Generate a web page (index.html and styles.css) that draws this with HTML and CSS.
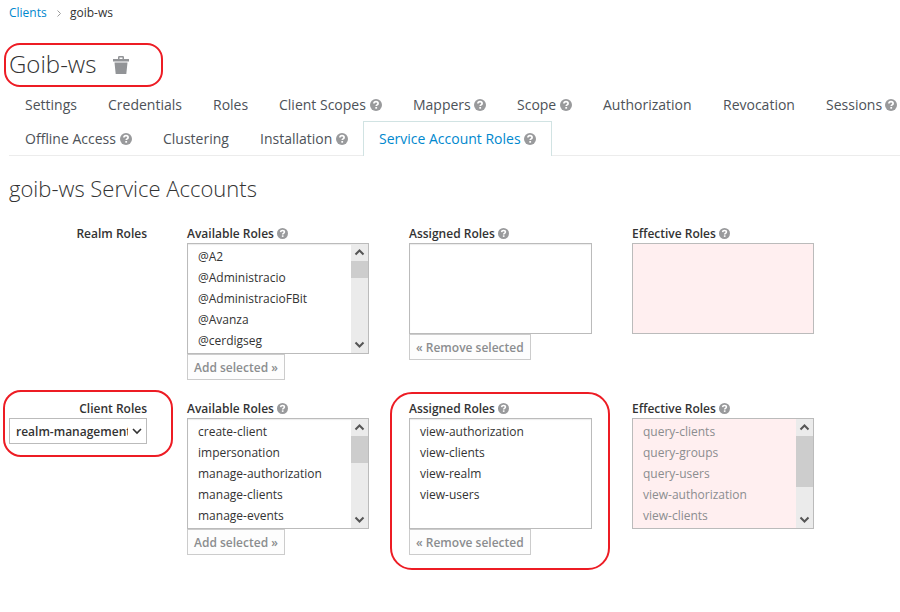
FILE: index.html
```html
<!DOCTYPE html>
<html lang="en">
<head>
<meta charset="utf-8">
<title>goib-ws</title>
<link rel="stylesheet" href="styles.css">
</head>
<body>
<svg class="defs" aria-hidden="true">
  <symbol id="help" viewBox="0 0 12 12"><circle cx="6" cy="6" r="6" fill="#999a9c"/><path d="M3.900 4.500C4 3.200 4.900 2.700 6 2.700c1.200 0 2.100.7 2.100 1.700 0 1.500-1.900 1.400-1.900 2.700" fill="none" stroke="#fff" stroke-width="1.700"/><path d="M5.300 8h1.800v1.700H5.300z" fill="#fff"/></symbol>
  <symbol id="up" viewBox="0 0 17 17"><path d="M4.500 10.500l4-4 4 4" fill="none" stroke="#555" stroke-width="2"/></symbol>
  <symbol id="down" viewBox="0 0 17 17"><path d="M4.500 6.500l4 4 4-4" fill="none" stroke="#555" stroke-width="2"/></symbol>
</svg>
<main class="page">
  <nav class="breadcrumb"><a class="crumb-link">Clients</a><svg class="crumb-sep" viewBox="0 0 4 7"><path d="M.5.5l3 3-3 3" fill="none" stroke="#9c9c9c"/></svg><span class="crumb-current">goib-ws</span></nav>
  <h1 class="title"><span class="title-text">Goib-ws</span><svg class="trash" viewBox="0 0 16 18"><path d="M0 3h5V1.200Q5 0 6.200 0h3.600Q11 0 11 1.200V3h5v2.500H0zM6.500 3h3V1.500h-3zM1.500 6.500h13L13.300 18H2.700z" fill="#929497" fill-rule="evenodd"/></svg></h1>

  <div class="tabs">
    <div class="tab-row">
      <a class="tab t-settings">Settings</a>
      <a class="tab t-credentials">Credentials</a>
      <a class="tab t-roles">Roles</a>
      <a class="tab t-client">Client Scopes<svg class="help"><use href="#help"/></svg></a>
      <a class="tab t-mappers">Mappers<svg class="help"><use href="#help"/></svg></a>
      <a class="tab t-scope">Scope<svg class="help"><use href="#help"/></svg></a>
      <a class="tab t-auth">Authorization</a>
      <a class="tab t-revocation">Revocation</a>
      <a class="tab t-sessions">Sessions<svg class="help"><use href="#help"/></svg></a>
    </div>
    <div class="tab-row last">
      <a class="tab t-offline">Offline Access<svg class="help"><use href="#help"/></svg></a>
      <a class="tab t-clustering">Clustering</a>
      <a class="tab t-install">Installation<svg class="help"><use href="#help"/></svg></a>
      <a class="tab t-service active">Service Account Roles<svg class="help"><use href="#help"/></svg></a>
    </div>
  </div>

  <h2 class="subtitle">goib-ws Service Accounts</h2>

  <section class="roles">
    <div class="group"><div class="label">Realm Roles</div></div>
    <div class="column">
      <div class="label">Available Roles<svg class="help" viewBox="0 0 12 12"><use href="#help" width="12" height="12"/></svg></div>
      <div class="list">
        <ul class="options"><li>@A2</li><li>@Administracio</li><li>@AdministracioFBit</li><li>@Avanza</li><li>@cerdigseg</li></ul>
        <div class="scrollbar"><svg class="arrow"><use href="#up"/></svg><div class="track"><div class="thumb small"></div></div><svg class="arrow"><use href="#down"/></svg></div>
      </div>
      <button class="btn add">Add selected »</button>
    </div>
    <div class="column">
      <div class="label">Assigned Roles<svg class="help"><use href="#help"/></svg></div>
      <div class="list empty"></div>
      <button class="btn remove">« Remove selected</button>
    </div>
    <div class="column">
      <div class="label">Effective Roles<svg class="help"><use href="#help"/></svg></div>
      <div class="list empty disabled"></div>
    </div>
  </section>

  <section class="roles">
    <div class="group">
      <div class="label">Client Roles</div>
      <div class="select"><span class="select-value">realm-management</span><svg class="chevron" viewBox="0 0 10 7"><path d="M1 1l4 4 4-4" fill="none" stroke="#333" stroke-width="1.600"/></svg></div>
    </div>
    <div class="column">
      <div class="label">Available Roles<svg class="help"><use href="#help"/></svg></div>
      <div class="list">
        <ul class="options"><li>create-client</li><li>impersonation</li><li>manage-authorization</li><li>manage-clients</li><li>manage-events</li></ul>
        <div class="scrollbar"><svg class="arrow"><use href="#up"/></svg><div class="track"><div class="thumb medium"></div></div><svg class="arrow"><use href="#down"/></svg></div>
      </div>
      <button class="btn add">Add selected »</button>
    </div>
    <div class="column">
      <div class="label">Assigned Roles<svg class="help"><use href="#help"/></svg></div>
      <div class="list">
        <ul class="options"><li>view-authorization</li><li>view-clients</li><li>view-realm</li><li>view-users</li></ul>
      </div>
      <button class="btn remove">« Remove selected</button>
    </div>
    <div class="column">
      <div class="label">Effective Roles<svg class="help"><use href="#help"/></svg></div>
      <div class="list disabled">
        <ul class="options"><li>query-clients</li><li>query-groups</li><li>query-users</li><li>view-authorization</li><li>view-clients</li></ul>
        <div class="scrollbar"><svg class="arrow"><use href="#up"/></svg><div class="track"><div class="thumb large"></div></div><svg class="arrow"><use href="#down"/></svg></div>
      </div>
    </div>
  </section>
</main>
<div class="mark mark-title"></div>
<div class="mark mark-client"></div>
<div class="mark mark-assigned"></div>
</body>
</html>
```
FILE: styles.css
```css
* { box-sizing: border-box; }
body {
  margin: 0;
  width: 900px;
  height: 612px;
  position: relative;
  overflow: hidden;
  background: #fff;
  color: #333;
  font: 12px/18px "Open Sans", sans-serif;
}
.defs { position: absolute; width: 0; height: 0; }
.page { padding: 4px 0 0 9px; }
.breadcrumb { display: flex; align-items: center; height: 18px; }
.crumb-link { color: #0088ce; width: 48px; }
.crumb-sep { width: 4px; height: 7px; margin-right: 9px; }
.title {
  display: flex;
  align-items: center;
  margin: 24px 0 0;
  height: 36px;
  font-size: 24px;
  font-weight: 300;
  line-height: 36px;
}
.title-text { width: 104px; }
.trash { width: 16px; height: 18px; margin-top: 2px; }
.tabs { margin-top: 5px; }
.tab-row { display: flex; height: 34px; }
.tab-row.last { height: 35px; border-bottom: 1px solid #ececec; }
.tab {
  flex: none;
  display: flex;
  align-items: center;
  padding: 2px 0 0 16px;
  font-size: 14px;
  color: #4d5258;
  white-space: nowrap;
}
.tab .help { width: 12px; height: 12px; margin-left: 4px; }
.t-settings { width: 83px; }
.t-credentials { width: 105px; }
.t-roles { width: 66px; }
.t-client { width: 134px; }
.t-mappers { width: 104px; }
.t-scope { width: 86px; }
.t-auth { width: 120px; }
.t-revocation { width: 103px; }
.t-offline { width: 138px; }
.t-clustering { width: 97px; }
.t-install { width: 119px; }
.t-service { width: 189px; }
.t-mappers .help, .t-service .help, .t-sessions .help { margin-left: 3px; }
.tab.active {
  height: 35px;
  padding: 0 0 0 15px;
  border: 1px solid #d1e3e3;
  border-bottom: 0;
  background: #fff;
  color: #0088ce;
}
.subtitle {
  margin: 17px 0 0;
  height: 30px;
  font-size: 22px;
  font-weight: 300;
  line-height: 30px;
}
.roles {
  display: grid;
  grid-template-columns: 138px 182px 183px 182px;
  column-gap: 40px;
  height: 175px;
}
.subtitle + .roles { margin-top: 22px; }
.label {
  display: flex;
  align-items: center;
  height: 18px;
  font-weight: 600;
  white-space: nowrap;
}
.label .help { width: 11px; height: 11px; margin: 0 0 1px 3px; }
.label .help use { width: 11px; height: 11px; }
.group .label { justify-content: flex-end; }
.list {
  display: flex;
  height: 111px;
  border: 1px solid #bbb;
  background: #fff;
  box-shadow: inset 0 1px 1px rgba(0, 0, 0, .08);
}
.list.empty { height: 91px; }
.list.disabled { background: #ffeff0; box-shadow: none; color: #8b8d8f; }
.options {
  flex: 1;
  margin: 0;
  padding: 2px 0 0 10px;
  list-style: none;
  line-height: 21px;
  white-space: nowrap;
}
.scrollbar { display: flex; flex-direction: column; width: 17px; background: #ebebeb; }
.arrow { width: 17px; height: 17px; }
.track { flex: 1; }
.thumb { background: #cdcdcd; }
.small { height: 17px; }
.medium { height: 27px; }
.large { height: 51px; }
.btn {
  display: block;
  height: 26px;
  padding: 2px 0 0 6px;
  border: 1px solid #ccc;
  background: #fdfdfd;
  color: #8b8d8f;
  font: 600 12px/22px "Open Sans", sans-serif;
  text-align: left;
  white-space: nowrap;
}
.add { width: 98px; }
.remove { width: 122px; }
.select {
  display: flex;
  align-items: center;
  height: 26px;
  padding: 2px 0 0 6px;
  border: 1px solid #bbb;
  font-weight: 600;
}
.select-value { width: 112px; overflow: hidden; white-space: nowrap; }
.chevron { width: 10px; height: 7px; margin: 0 0 1px 4px; }
.mark { position: absolute; border: 2px solid #ed1c24; pointer-events: none; }
.mark-title { left: 4px; top: 43px; width: 159px; height: 44px; border-radius: 16px; }
.mark-client { left: 3px; top: 390px; width: 170px; height: 67px; border-radius: 18px; }
.mark-assigned { left: 390px; top: 392px; width: 220px; height: 178px; border-radius: 22px; }
```
